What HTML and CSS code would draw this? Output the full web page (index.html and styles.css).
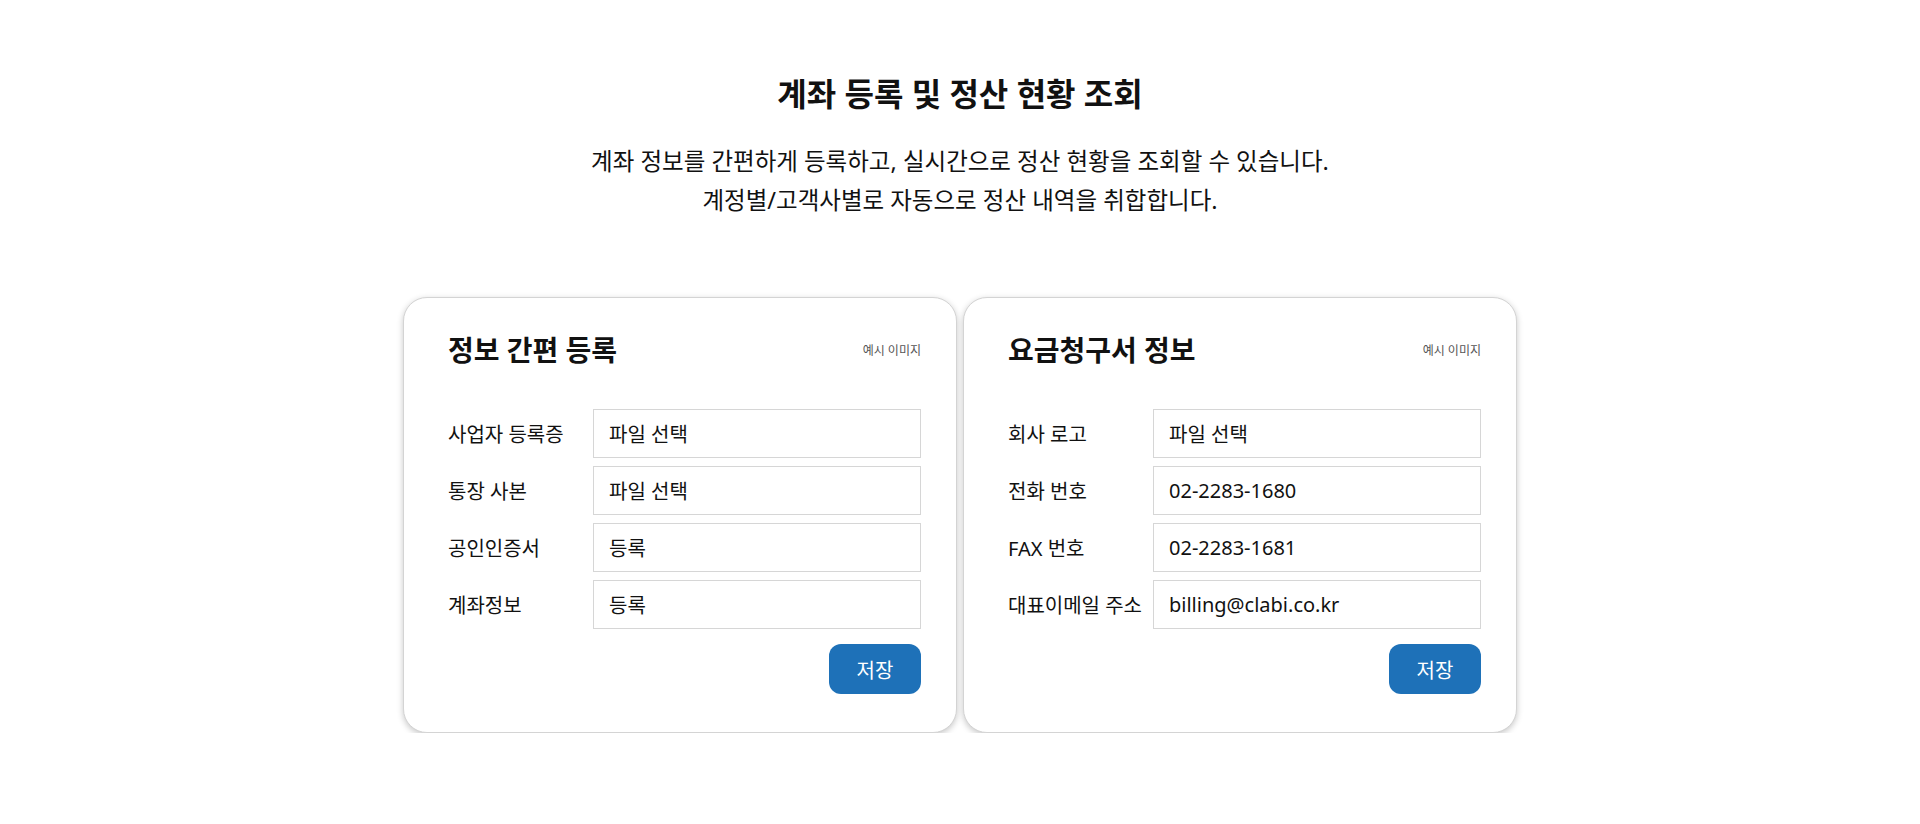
FILE: index.html
```html
<!DOCTYPE html>
<html lang="ko">
<head>
<meta charset="utf-8">
<title>계좌 등록 및 정산 현황 조회</title>
<link rel="stylesheet" href="styles.css">
</head>
<body>
<main class="page">
  <header class="intro">
    <h1 class="intro-title">계좌 등록 및 정산 현황 조회</h1>
    <p class="intro-text">계좌 정보를 간편하게 등록하고, 실시간으로 정산 현황을 조회할 수 있습니다.<br>계정별/고객사별로 자동으로 정산 내역을 취합합니다.</p>
  </header>
  <section class="cards">
    <div class="card">
      <div class="card-head">
        <h2 class="card-title">정보 간편 등록</h2>
        <span class="card-note">예시 이미지</span>
      </div>
      <div class="form">
        <div class="row"><span class="label">사업자 등록증</span><div class="field">파일 선택</div></div>
        <div class="row"><span class="label">통장 사본</span><div class="field">파일 선택</div></div>
        <div class="row"><span class="label">공인인증서</span><div class="field">등록</div></div>
        <div class="row"><span class="label">계좌정보</span><div class="field">등록</div></div>
      </div>
      <div class="actions"><button class="btn">저장</button></div>
    </div>
    <div class="card">
      <div class="card-head">
        <h2 class="card-title">요금청구서 정보</h2>
        <span class="card-note">예시 이미지</span>
      </div>
      <div class="form">
        <div class="row"><span class="label">회사 로고</span><div class="field">파일 선택</div></div>
        <div class="row"><span class="label">전화 번호</span><div class="field">02-2283-1680</div></div>
        <div class="row"><span class="label">FAX 번호</span><div class="field">02-2283-1681</div></div>
        <div class="row"><span class="label">대표이메일 주소</span><div class="field">billing@clabi.co.kr</div></div>
      </div>
      <div class="actions"><button class="btn">저장</button></div>
    </div>
  </section>
</main>
</body>
</html>
```

FILE: styles.css
```css
* { box-sizing: border-box; }
html, body {
  margin: 0;
  padding: 0;
  background: #ffffff;
}
body {
  font-family: "Noto Sans", "Noto Sans CJK KR", sans-serif;
  color: #111111;
}
.page {
  display: flex;
  flex-direction: column;
  align-items: center;
  padding-top: 73px;
}
.intro {
  text-align: center;
}
.intro-title {
  margin: 0;
  font-size: 32px;
  line-height: 42px;
  font-weight: 700;
  color: #111;
}
.intro-text {
  margin: 27px 0 0;
  font-size: 23.5px;
  line-height: 39px;
  font-weight: 400;
  color: #111;
}
.cards {
  display: flex;
  gap: 6px;
  margin-top: 77px;
}
.card {
  width: 554px;
  height: 436px;
  border: 1px solid #d4d4d4;
  border-radius: 24px;
  background: #fff;
  box-shadow: 0 2px 6px rgba(0, 0, 0, 0.22);
  padding: 34px 35px 37px 44px;
  display: flex;
  flex-direction: column;
}
.card-head {
  display: flex;
  align-items: center;
  justify-content: space-between;
  height: 36px;
}
.card-title {
  margin: 0;
  font-size: 28px;
  line-height: 36px;
  font-weight: 700;
  color: #111;
}
.card-note {
  font-size: 12px;
  color: #555;
}
.form {
  margin-top: 41px;
  display: flex;
  flex-direction: column;
  gap: 8px;
}
.row {
  display: flex;
  align-items: center;
}
.label {
  width: 145px;
  flex: none;
  font-size: 20px;
  color: #111;
}
.field {
  flex: 1;
  height: 49px;
  border: 1px solid #d6d6d6;
  padding: 0 15px;
  display: flex;
  align-items: center;
  font-size: 20px;
  color: #111;
}
.actions {
  margin-top: 15px;
  display: flex;
  justify-content: flex-end;
}
.btn {
  width: 92px;
  height: 50px;
  border: none;
  border-radius: 12px;
  background: #1e71b8;
  color: #fff;
  font-family: inherit;
  font-size: 20px;
  cursor: pointer;
}
```
